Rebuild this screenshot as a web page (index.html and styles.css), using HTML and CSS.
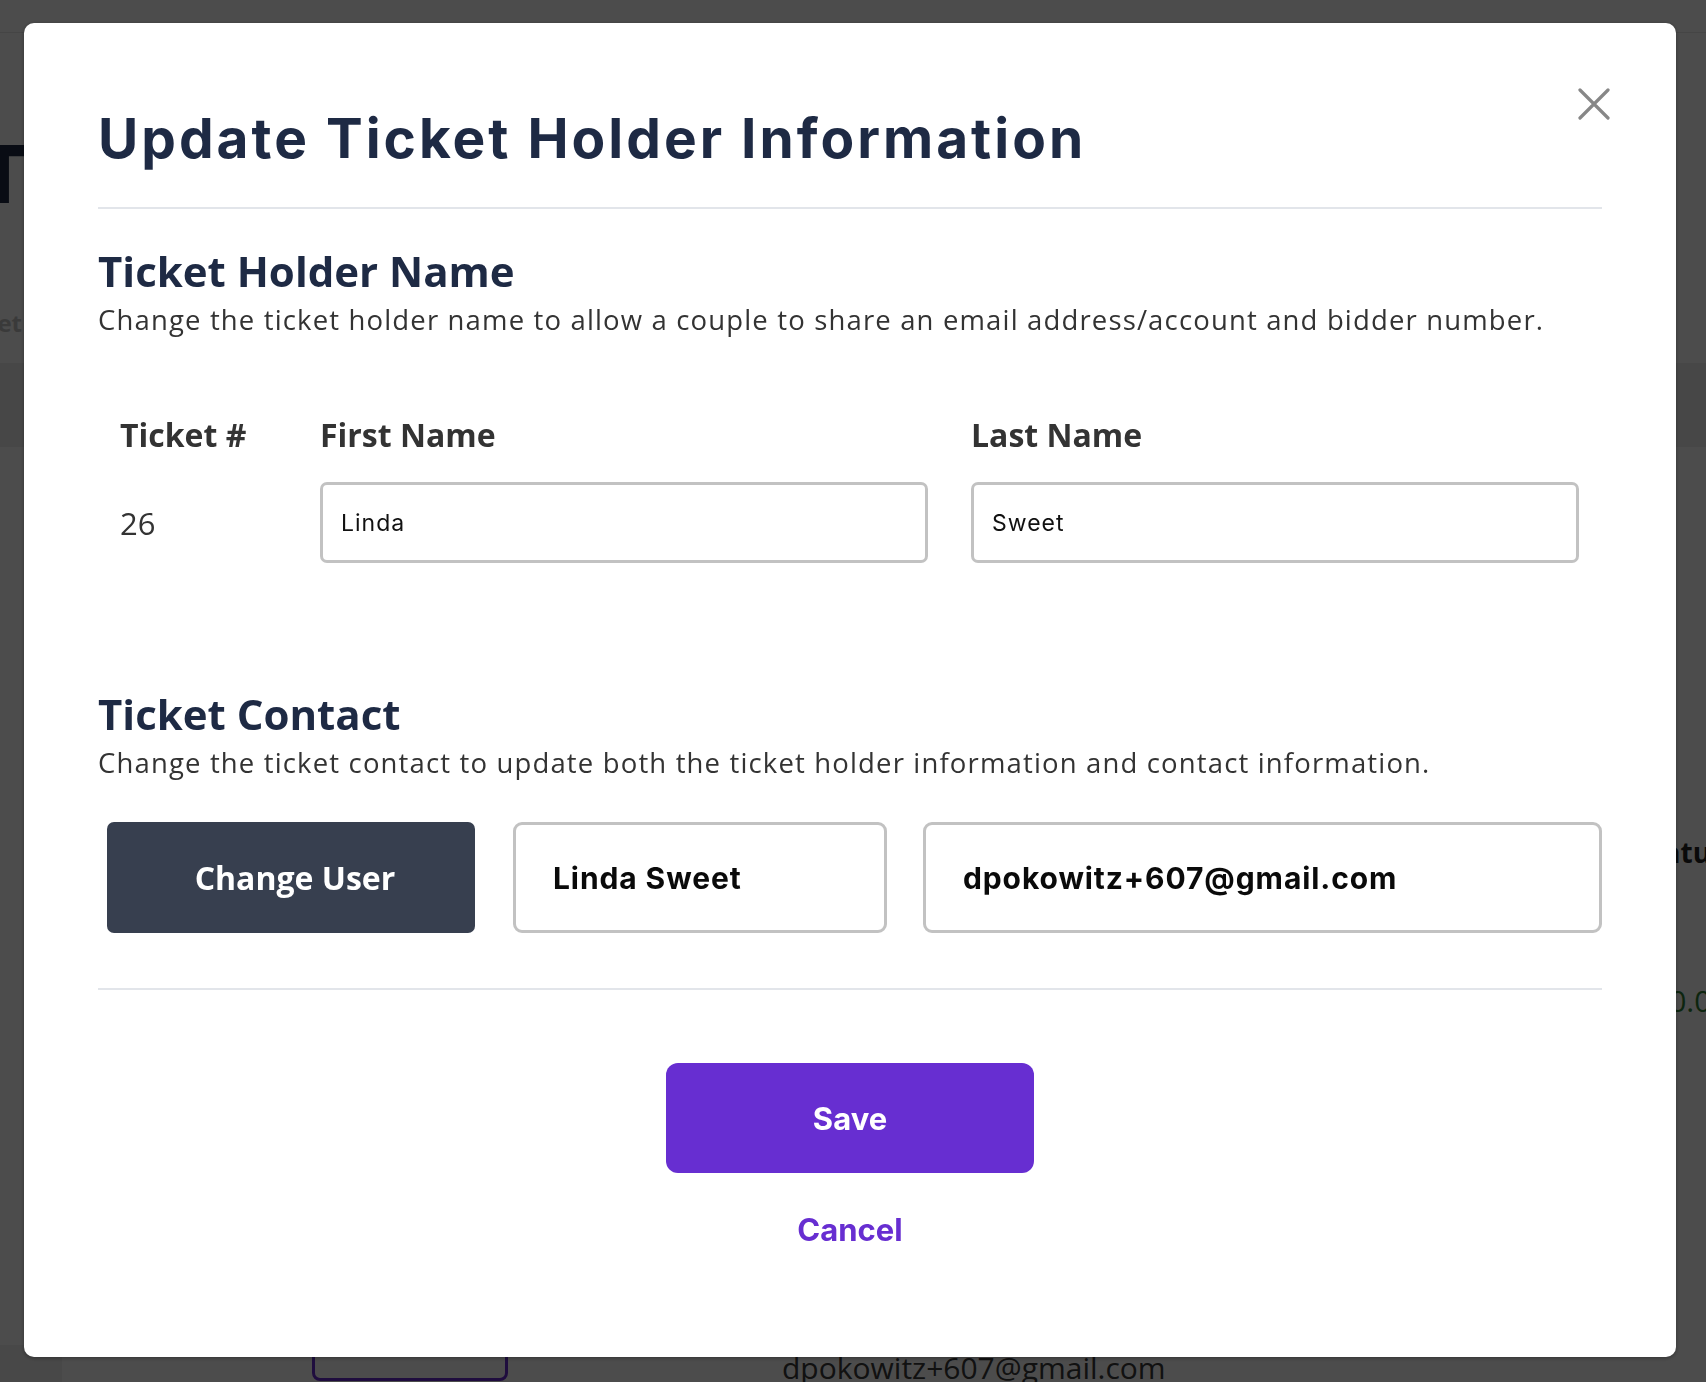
FILE: index.html
```html
<!DOCTYPE html>
<html lang="en">
<head>
<meta charset="utf-8">
<title>Update Ticket Holder Information</title>
<link rel="stylesheet" href="styles.css">
</head>
<body>
<div class="page">
  <div class="topbar"></div>
  <h1 class="page-title">Tickets</h1>
  <div class="page-sub"><span>Ticket</span></div>
  <div class="page-band"></div>
  <div class="page-status">Status</div>
  <div class="page-amount">$0.00</div>
  <div class="page-bottom">
    <div class="page-side"></div>
    <div class="page-btn"></div>
    <div class="page-email">dpokowitz+607@gmail.com</div>
  </div>
</div>

<div class="overlay">
  <div class="modal" role="dialog" aria-labelledby="modal-title">
    <button class="close" type="button" aria-label="Close">
      <svg width="32" height="32" viewBox="0 0 32 32" aria-hidden="true">
        <path d="M2 2 L30 30 M30 2 L2 30" stroke="#878787" stroke-width="3.2" stroke-linecap="round" fill="none"/>
      </svg>
    </button>
    <header class="modal-header">
      <h2 id="modal-title" class="modal-title">Update Ticket Holder Information</h2>
    </header>

    <section class="section section-name">
      <h3 class="section-title">Ticket Holder Name</h3>
      <p class="section-desc">Change the ticket holder name to allow a couple to share an email address/account and bidder number.</p>
      <div class="name-grid">
        <div class="col-label">Ticket #</div>
        <div class="col-label">First Name</div>
        <div class="col-label">Last Name</div>
        <div class="ticket-num">26</div>
        <input class="text-input" type="text" value="Linda" aria-label="First Name">
        <input class="text-input" type="text" value="Sweet" aria-label="Last Name">
      </div>
    </section>

    <section class="section section-contact">
      <h3 class="section-title">Ticket Contact</h3>
      <p class="section-desc">Change the ticket contact to update both the ticket holder information and contact information.</p>
      <div class="contact-row">
        <button class="btn-change" type="button">Change User</button>
        <div class="contact-box contact-name">Linda Sweet</div>
        <div class="contact-box contact-email">dpokowitz+607@gmail.com</div>
      </div>
    </section>

    <footer class="modal-footer">
      <button class="btn-save" type="button">Save</button>
      <button class="btn-cancel" type="button">Cancel</button>
    </footer>
  </div>
</div>
</body>
</html>
```

FILE: styles.css
```css
html, body {
  margin: 0;
  padding: 0;
  height: 100%;
  overflow: hidden;
}

body {
  background: #ffffff;
  font-family: "Open Sans", "Noto Sans", sans-serif;
  color: #333333;
}

/* ---------- page underneath the overlay ---------- */
.page {
  display: flex;
  flex-direction: column;
}

.topbar {
  height: 32px;
  background: #ffffff;
  border-bottom: 1px solid #e6e6e6;
}

.page-title {
  margin: 101px 0 0 -25px;
  font-family: Inter, sans-serif;
  font-weight: 800;
  font-size: 80px;
  line-height: 80px;
  color: #1e2a44;
}

.page-sub {
  margin-top: 94px;
  width: 22px;
  display: flex;
  justify-content: flex-end;
  font-size: 24px;
  line-height: 30px;
  font-weight: 700;
  color: #c4c4c4;
  white-space: nowrap;
}

.page-band {
  margin-top: 25px;
  height: 84px;
  background: #efefef;
}

.page-status {
  margin: 388px 0 0 1636px;
  font-size: 28px;
  line-height: 34px;
  font-weight: 700;
  color: #222222;
  white-space: nowrap;
}

.page-amount {
  margin: 114px 0 0 1652px;
  font-size: 30px;
  line-height: 36px;
  color: #2e7d32;
  white-space: nowrap;
}

.page-bottom {
  margin-top: 326px;
  display: flex;
  align-items: flex-start;
}

.page-side {
  width: 62px;
  height: 40px;
  background: #f0f0f0;
}

.page-btn {
  width: 196px;
  height: 36px;
  margin-left: 250px;
  box-sizing: border-box;
  border: 3px solid #6a2ed1;
  border-radius: 8px;
}

.page-email {
  margin: 3px 0 0 274px;
  font-size: 30px;
  line-height: 40px;
  color: #3a3a3a;
  white-space: nowrap;
}

/* ---------- overlay + modal ---------- */
.overlay {
  position: fixed;
  inset: 0;
  background: rgba(0, 0, 0, 0.7);
}

.modal {
  position: relative;
  box-sizing: border-box;
  width: 1652px;
  height: 1334px;
  margin: 23px 0 0 24px;
  padding: 82px 74px 0 74px;
  background: #ffffff;
  border-radius: 10px;
  box-shadow: 0 1px 4px rgba(0, 0, 0, 0.35);
  display: flex;
  flex-direction: column;
}

.close {
  position: absolute;
  top: 65px;
  right: 66px;
  width: 32px;
  height: 32px;
  padding: 0;
  border: 0;
  background: none;
  cursor: pointer;
}

.close svg {
  display: block;
}

.modal-header {
  padding-bottom: 36px;
  border-bottom: 2px solid #e2e5ea;
}

.modal-title {
  margin: 0;
  font-family: Inter, sans-serif;
  font-weight: 700;
  font-size: 55px;
  line-height: 66px;
  letter-spacing: 3px;
  color: #1e2a44;
}

.section-name {
  margin-top: 37px;
}

.section-contact {
  margin-top: 126px;
}

.section-title {
  margin: 0;
  font-family: "Open Sans", sans-serif;
  font-weight: 700;
  font-size: 42px;
  line-height: 50px;
  color: #1e2a44;
}

.section-desc {
  margin: 6px 0 0;
  font-family: "Open Sans", sans-serif;
  font-size: 27.5px;
  line-height: 36px;
  letter-spacing: 1.15px;
  color: #333333;
  white-space: nowrap;
}

.name-grid {
  margin-top: 77px;
  padding: 0 23px 0 22px;
  display: grid;
  grid-template-columns: 157px 1fr 1fr;
  grid-template-rows: 40px 81px;
  column-gap: 43px;
  row-gap: 27px;
}

.col-label {
  font-family: "Open Sans", sans-serif;
  font-weight: 700;
  font-size: 32px;
  line-height: 40px;
  color: #333333;
  white-space: nowrap;
}

.ticket-num {
  align-self: center;
  font-family: "Open Sans", sans-serif;
  font-size: 31px;
  line-height: 40px;
  color: #333333;
}

.text-input {
  box-sizing: border-box;
  width: 100%;
  height: 81px;
  margin: 0;
  padding: 0 18px;
  border: 3px solid #c2c2c2;
  border-radius: 7px;
  background: #ffffff;
  font-family: Inter, sans-serif;
  font-size: 23px;
  letter-spacing: 1px;
  color: #111111;
  outline: none;
}

.contact-row {
  margin-top: 41px;
  padding-left: 9px;
  display: flex;
  align-items: stretch;
  height: 111px;
}

.btn-change {
  width: 368px;
  flex: none;
  margin: 0 38px 0 0;
  padding: 0 0 0 8px;
  border: 0;
  border-radius: 7px;
  background: #373f4f;
  color: #ffffff;
  font-family: "Open Sans", sans-serif;
  font-weight: 700;
  font-size: 32px;
  cursor: pointer;
}

.contact-box {
  box-sizing: border-box;
  display: flex;
  align-items: center;
  padding-left: 37px;
  border: 3px solid #c2c2c2;
  border-radius: 9px;
  font-family: Inter, sans-serif;
  font-weight: 700;
  font-size: 30px;
  letter-spacing: 0.9px;
  color: #0a0a0a;
  white-space: nowrap;
}

.contact-name {
  width: 374px;
  flex: none;
  margin-right: 36px;
}

.contact-email {
  flex: 1;
}

.modal-footer {
  margin-top: 55px;
  border-top: 2px solid #e2e5ea;
  display: flex;
  flex-direction: column;
  align-items: center;
}

.btn-save {
  margin-top: 73px;
  width: 368px;
  height: 110px;
  padding: 0;
  border: 0;
  border-radius: 12px;
  background: #672ed1;
  color: #ffffff;
  font-family: Inter, sans-serif;
  font-weight: 700;
  font-size: 31px;
  cursor: pointer;
}

.btn-cancel {
  margin-top: 37px;
  padding: 0;
  border: 0;
  background: none;
  color: #672ed1;
  font-family: Inter, sans-serif;
  font-weight: 700;
  font-size: 31px;
  line-height: 40px;
  cursor: pointer;
}
```
